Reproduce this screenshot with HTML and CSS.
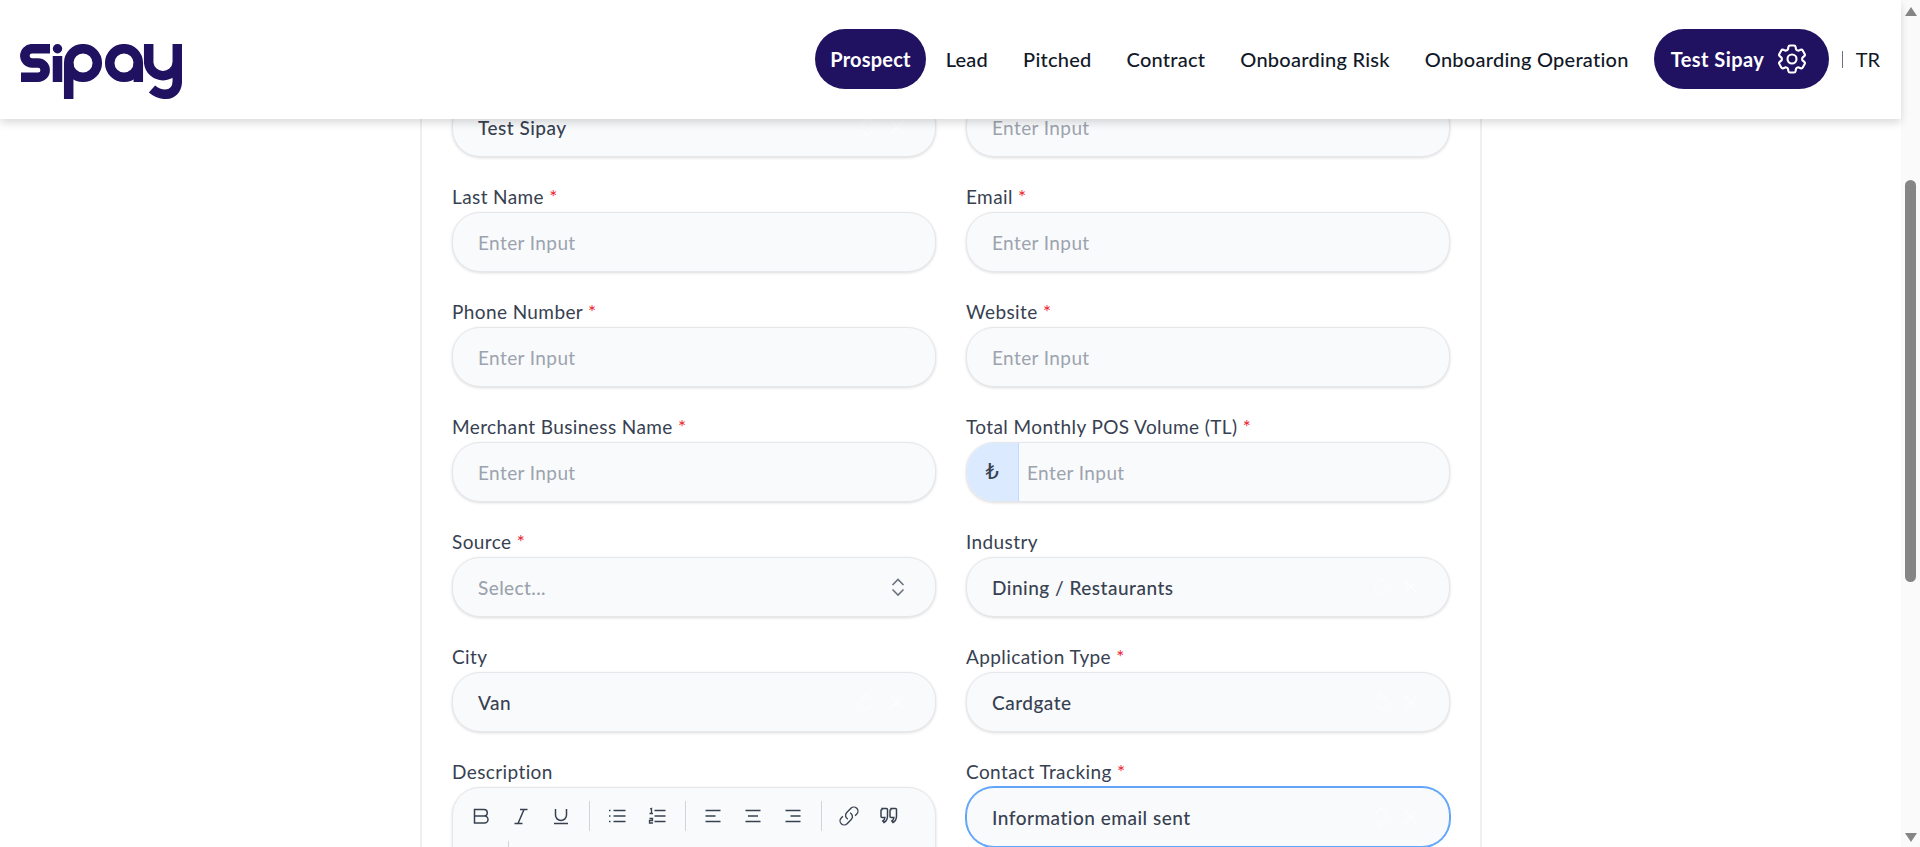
FILE: index.html
```html
<!DOCTYPE html>
<html>
	<head>
		<title>Sipay - Prospect</title>
		<link rel="stylesheet" href="styles.css">
	</head>
	<body>
		<div class="page">
			<div class="view">
				<!--header-->
				<header class="topbar">
					<svg class="logo" viewBox="0 0 162 55" width="162" height="55" fill="none" stroke="#211261" stroke-width="9.5">
						<path d="M30 4.7H12A7.15 7.15 0 0 0 12 19H18A7.15 7.15 0 0 1 18 33.3H1"/>
						<circle cx="37.5" cy="4.7" r="4.7" fill="#211261" stroke="none"/>
						<path d="M37.5 12V38"/>
						<circle cx="63" cy="19" r="14.3"/>
						<path d="M48.7 19V55"/>
						<circle cx="104" cy="19" r="14.3"/>
						<path d="M118.3 19V38"/>
						<path d="M128.7 0V19A14.4 14.4 0 0 0 157.3 19"/>
						<path d="M157.3 0V37C157.3 46 152 50.3 145 50.3 140 50.3 136 48.5 132 45"/>
					</svg>
					<nav class="nav">
						<a class="nav-item active">Prospect</a>
						<a class="nav-item">Lead</a>
						<a class="nav-item">Pitched</a>
						<a class="nav-item">Contract</a>
						<a class="nav-item">Onboarding Risk</a>
						<a class="nav-item">Onboarding Operation</a>
						<a class="user-pill">Test Sipay
							<svg viewBox="0 0 24 24" width="36" height="36" fill="none" stroke="#fff" stroke-width="1.4" stroke-linecap="round" stroke-linejoin="round">
								<path d="M9.594 3.94c.09-.542.56-.94 1.11-.94h2.593c.55 0 1.02.398 1.11.94l.213 1.281c.063.374.313.686.645.87.074.04.147.083.22.127.325.196.72.257 1.075.124l1.217-.456a1.125 1.125 0 0 1 1.37.49l1.296 2.247a1.125 1.125 0 0 1-.26 1.431l-1.003.827c-.293.241-.438.613-.43.992a7.723 7.723 0 0 1 0 .255c-.008.378.137.75.43.991l1.004.827c.424.35.534.955.26 1.43l-1.298 2.247a1.125 1.125 0 0 1-1.369.491l-1.217-.456c-.355-.133-.75-.072-1.076.124a6.47 6.47 0 0 1-.22.128c-.331.183-.581.495-.644.869l-.213 1.281c-.09.543-.56.94-1.11.94h-2.594c-.55 0-1.019-.398-1.11-.94l-.213-1.281c-.062-.374-.312-.686-.644-.87a6.52 6.52 0 0 1-.22-.127c-.325-.196-.72-.257-1.076-.124l-1.217.456a1.125 1.125 0 0 1-1.369-.49l-1.297-2.247a1.125 1.125 0 0 1 .26-1.431l1.004-.827c.292-.24.437-.613.43-.991a6.932 6.932 0 0 1 0-.255c.007-.38-.138-.751-.43-.992l-1.004-.827a1.125 1.125 0 0 1-.26-1.43l1.297-2.247a1.125 1.125 0 0 1 1.37-.491l1.216.456c.356.133.751.072 1.076-.124.072-.044.146-.086.22-.128.332-.183.582-.495.644-.869l.214-1.28Z"/>
								<path d="M15 12a3 3 0 1 1-6 0 3 3 0 0 1 6 0Z"/>
							</svg>
						</a>
						<span class="lang">TR</span>
					</nav>
				</header>
				<!--/header-->
				<main class="main">
					<form class="card">
						<!--first row sits under the header, its labels are scrolled away-->
						<div class="field">
							<div class="select"><span class="value">Test Sipay</span>
								<svg class="ghost" viewBox="0 0 52 20" width="52" height="20"><path d="M3.500 8L10 1.500 16.500 8M3.500 12L10 18.500 16.500 12M33.500 3.500l13 13M46.500 3.500l-13 13"/></svg>
							</div>
						</div>
						<div class="field">
							<input class="input" placeholder="Enter Input">
						</div>
						<div class="field">
							<label>Last Name <b>*</b></label>
							<input class="input" placeholder="Enter Input">
						</div>
						<div class="field">
							<label>Email <b>*</b></label>
							<input class="input" placeholder="Enter Input">
						</div>
						<div class="field">
							<label>Phone Number <b>*</b></label>
							<input class="input" placeholder="Enter Input">
						</div>
						<div class="field">
							<label>Website <b>*</b></label>
							<input class="input" placeholder="Enter Input">
						</div>
						<div class="field">
							<label>Merchant Business Name <b>*</b></label>
							<input class="input" placeholder="Enter Input">
						</div>
						<div class="field">
							<label>Total Monthly POS Volume (TL) <b>*</b></label>
							<div class="money">
								<span class="addon">₺</span>
								<input class="money-input" placeholder="Enter Input">
							</div>
						</div>
						<div class="field">
							<label>Source <b>*</b></label>
							<div class="select"><span class="placeholder">Select...</span>
								<svg class="updown" viewBox="0 0 14 20" width="14" height="20" fill="none" stroke="#6b7280" stroke-width="1.6"><path d="M1.500 8L7 2.500 12.500 8M1.500 12.500L7 18l5.500-5.500"/></svg>
							</div>
						</div>
						<div class="field">
							<label>Industry</label>
							<div class="select"><span class="value">Dining / Restaurants</span>
								<svg class="ghost" viewBox="0 0 52 20" width="52" height="20"><path d="M3.500 8L10 1.500 16.500 8M3.500 12L10 18.500 16.500 12M33.500 3.500l13 13M46.500 3.500l-13 13"/></svg>
							</div>
						</div>
						<div class="field">
							<label>City</label>
							<div class="select"><span class="value">Van</span>
								<svg class="ghost" viewBox="0 0 52 20" width="52" height="20"><path d="M3.500 8L10 1.500 16.500 8M3.500 12L10 18.500 16.500 12M33.500 3.500l13 13M46.500 3.500l-13 13"/></svg>
							</div>
						</div>
						<div class="field">
							<label>Application Type <b>*</b></label>
							<div class="select"><span class="value">Cardgate</span>
								<svg class="ghost" viewBox="0 0 52 20" width="52" height="20"><path d="M3.500 8L10 1.500 16.500 8M3.500 12L10 18.500 16.500 12M33.500 3.500l13 13M46.500 3.500l-13 13"/></svg>
							</div>
						</div>
						<div class="field">
							<label>Description</label>
							<div class="editor">
								<div class="tools">
									<button type="button" class="tool"><svg viewBox="0 0 20 20" width="20" height="20"><path d="M3.500 3.500H13a3.250 3.250 0 0 1 0 6.500H3.500ZM3.500 10H13.500a3.500 3.500 0 0 1 0 7H3.500Z"/></svg></button>
									<button type="button" class="tool"><svg viewBox="0 0 20 20" width="20" height="20"><path d="M9 3.500h7.500M3.500 17.500h8M13 3.500L7 17.500"/></svg></button>
									<button type="button" class="tool"><svg viewBox="0 0 20 20" width="20" height="20"><path d="M4.500 3v6a5.500 5.500 0 0 0 11 0V3M3 17.500h14"/></svg></button>
									<i class="sep"></i>
									<button type="button" class="tool"><svg viewBox="0 0 20 20" width="20" height="20"><path d="M6.500 4.500h12M6.500 10h12M6.500 15.500h12M2 4.500h1.500M2 10h1.500M2 15.500h1.500"/></svg></button>
									<button type="button" class="tool"><svg viewBox="0 0 20 20" width="20" height="20"><path d="M7.500 4.500h11M7.500 10h11M7.500 15.500h11M3 3l1.500-.500V7.500M2.500 7.500H6M2.500 12.500h3V14.500h-3V17H6" stroke-width="1.300"/></svg></button>
									<i class="sep"></i>
									<button type="button" class="tool"><svg viewBox="0 0 20 20" width="20" height="20"><path d="M2.500 4.500h15M2.500 10h10M2.500 15.500h15"/></svg></button>
									<button type="button" class="tool"><svg viewBox="0 0 20 20" width="20" height="20"><path d="M2.500 4.500h15M5 10h10M2.500 15.500h15"/></svg></button>
									<button type="button" class="tool"><svg viewBox="0 0 20 20" width="20" height="20"><path d="M2.500 4.500h15M7.500 10h10M2.500 15.500h15"/></svg></button>
									<i class="sep"></i>
									<button type="button" class="tool"><svg viewBox="0 0 24 24" width="22" height="22"><path d="M13.190 8.688a4.500 4.500 0 0 1 1.242 7.244l-4.500 4.500a4.500 4.500 0 0 1-6.364-6.364l1.757-1.757m13.350-.622 1.757-1.757a4.500 4.500 0 0 0-6.364-6.364l-4.500 4.500a4.500 4.500 0 0 0 1.242 7.244"/></svg></button>
									<button type="button" class="tool"><svg viewBox="0 0 20 20" width="20" height="20"><path d="M3 2.500h4.500a1 1 0 0 1 1 1v6.500c0 3-1.300 5.300-3.500 6.500l-1.200-1.500c1.400-.8 2-2 2.100-3.500H3a1 1 0 0 1-1-1v-6a1 1 0 0 1 1-1ZM12 2.500h4.500a1 1 0 0 1 1 1v6.500c0 3-1.300 5.300-3.500 6.500l-1.200-1.500c1.400-.8 2-2 2.100-3.500H12a1 1 0 0 1-1-1v-6a1 1 0 0 1 1-1Z"/></svg></button>
								</div>
								<div class="tools-two"><i class="sep tall"></i></div>
							</div>
						</div>
						<div class="field">
							<label>Contact Tracking <b>*</b></label>
							<div class="select focused"><span class="value">Information email sent</span>
								<svg class="ghost" viewBox="0 0 52 20" width="52" height="20"><path d="M3.500 8L10 1.500 16.500 8M3.500 12L10 18.500 16.500 12M33.500 3.500l13 13M46.500 3.500l-13 13"/></svg>
							</div>
						</div>
					</form>
				</main>
			</div>
			<!--scrollbar-->
			<div class="scrollbar">
				<i class="arrow up"></i>
				<i class="thumb"></i>
				<i class="arrow down"></i>
			</div>
		</div>
	</body>
</html>
```

FILE: styles.css
```css
*{
	box-sizing:border-box;
}
body{
	margin:0;
	font-family:Lato, "Noto Sans", sans-serif;
	color:#374151;
	background:#fff;
}
.page{
	display:flex;
	height:100vh;
	overflow:hidden;
}
.view{
	flex:1;
	min-width:0;
	display:flex;
	flex-direction:column;
}
.topbar{
	position:relative;
	z-index:2;
	flex:none;
	height:119px;
	display:flex;
	align-items:center;
	justify-content:space-between;
	padding:0 21px 1px 20px;
	background:#fff;
	box-shadow:0 4px 8px rgba(0, 0, 0, 0.14);
}
.logo{
	margin-top:24px;
	display:block;
}
.nav{
	display:flex;
	align-items:center;
	gap:5px;
}
.nav-item{
	height:60px;
	display:flex;
	align-items:center;
	padding:0 15px;
	border-radius:30px;
	font-size:20px;
	font-weight:500;
	letter-spacing:0.25px;
	color:#111827;
}
.nav-item.active{
	background:#211261;
	color:#fff;
	font-weight:700;
	letter-spacing:0.2px;
}
.user-pill{
	width:175px;
	height:60px;
	margin-left:5px;
	display:flex;
	align-items:center;
	justify-content:space-between;
	padding:0 19px 0 17px;
	border-radius:30px;
	background:#211261;
	color:#fff;
	font-size:20px;
	font-weight:700;
	letter-spacing:0.45px;
}
.lang{
	margin-left:8px;
	padding-left:13px;
	border-left:1px solid #6b7280;
	font-size:20px;
	line-height:17px;
	color:#111827;
}
.main{
	flex:1;
	min-height:0;
	padding-left:1px;
	overflow:hidden;
}
.card{
	width:1062px;
	margin:-22px auto 0;
	padding:0 30px 40px;
	border:2px solid #eeeff1;
	border-top:0;
	display:grid;
	grid-template-columns:484px 484px;
	gap:25px 30px;
}
.field label{
	display:block;
	height:29px;
	margin-bottom:1px;
	padding-top:1px;
	font-size:19px;
	letter-spacing:0.4px;
	line-height:28px;
}
.field label b{
	font-weight:400;
	color:#ee1c2e;
}
.input, .select, .money, .editor{
	width:100%;
	height:60px;
	border:1px solid #e5e7eb;
	border-radius:28px;
	background:#f9fafb;
	box-shadow:0 1px 3px rgba(0, 0, 0, 0.14);
	font-family:inherit;
	font-size:19px;
	letter-spacing:0.4px;
}
.input{
	padding:0 25px;
	outline:none;
}
input::placeholder{
	color:#9ca3af;
	opacity:1;
}
.select{
	display:flex;
	align-items:center;
	justify-content:space-between;
	padding:0 26px 0 25px;
}
.value{
	font-weight:500;
	letter-spacing:0.5px;
	color:#374151;
}
.placeholder{
	color:#9ca3af;
	font-weight:500;
}
.ghost{
	fill:none;
	stroke:#fdfdfe;
	stroke-width:1.5;
}
.updown{
	margin-right:4px;
}
.select.focused{
	border-color:#60a5fa;
	box-shadow:0 0 0 1px #60a5fa;
}
.money{
	display:flex;
	overflow:hidden;
}
.addon{
	width:52px;
	display:flex;
	align-items:center;
	justify-content:center;
	background:#dbeafe;
	border-right:1px solid #bfdbfe;
	font-family:"DejaVu Sans", sans-serif;
	font-size:21px;
}
.money-input{
	flex:1;
	min-width:0;
	padding:0 8px;
	border:0;
	background:none;
	outline:none;
	font:inherit;
	letter-spacing:inherit;
}
.editor{
	height:100px;
	padding:13px 12px 0;
}
.tools{
	height:30px;
	display:flex;
	align-items:center;
}
.tool{
	width:32px;
	height:30px;
	margin-right:8px;
	padding:0;
	display:flex;
	align-items:center;
	justify-content:center;
	border:0;
	background:none;
}
.tool svg{
	fill:none;
	stroke:#374151;
	stroke-width:1.5;
}
.sep{
	width:1px;
	height:30px;
	margin:0 11px 0 4px;
	background:#d1d5db;
}
.tools-two{
	height:40px;
	margin-top:10px;
	padding-left:43px;
}
.sep.tall{
	display:block;
	margin:0;
	height:40px;
}
.scrollbar{
	flex:none;
	width:19px;
	display:flex;
	flex-direction:column;
	align-items:center;
	padding-top:7px;
	background:#fafafa;
}
.arrow{
	width:0;
	height:0;
	border-left:6px solid transparent;
	border-right:6px solid transparent;
}
.arrow.up{
	border-bottom:9px solid #858585;
}
.thumb{
	width:11px;
	height:402px;
	margin:164px 0 251px;
	border-radius:6px;
	background:#858585;
}
.arrow.down{
	border-top:9px solid #858585;
}
```
